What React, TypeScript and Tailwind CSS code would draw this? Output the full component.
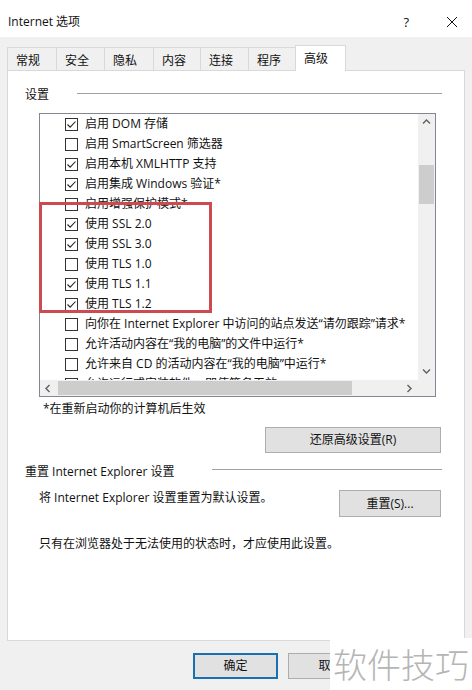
import React from 'react';

const rows: [boolean, string][] = [
  [true, '启用 DOM 存储'],
  [false, '启用 SmartScreen 筛选器'],
  [true, '启用本机 XMLHTTP 支持'],
  [true, '启用集成 Windows 验证*'],
  [false, '启用增强保护模式*'],
  [true, '使用 SSL 2.0'],
  [true, '使用 SSL 3.0'],
  [false, '使用 TLS 1.0'],
  [true, '使用 TLS 1.1'],
  [true, '使用 TLS 1.2'],
  [false, '向你在 Internet Explorer 中访问的站点发送“请勿跟踪”请求*'],
  [false, '允许活动内容在“我的电脑”的文件中运行*'],
  [false, '允许来自 CD 的活动内容在“我的电脑”中运行*'],
  [false, '允许运行或安装软件，即使签名无效'],
];

const tabs = [
  { label: '常规', w: 'w-[49px]' },
  { label: '安全', w: 'w-[48px]' },
  { label: '隐私', w: 'w-[49px]' },
  { label: '内容', w: 'w-[47px]' },
  { label: '连接', w: 'w-[48px]' },
  { label: '程序', w: 'w-[47px]' },
];

function Check({ on }: { on: boolean }) {
  return (
    <span className="flex h-[13px] w-[13px] shrink-0 items-center justify-center border border-[#333] bg-white">
      {on && (
        <svg width="11" height="11" viewBox="0 0 11 11">
          <path d="M1.5 5.5 4.2 8.2 9.5 2.5" fill="none" stroke="#222" strokeWidth="1.1" />
        </svg>
      )}
    </span>
  );
}

function Chevron({ dir }: { dir: 'up' | 'down' | 'left' | 'right' }) {
  const d = {
    up: 'M1 5.5 4.5 2 8 5.5',
    down: 'M1 2.5 4.5 6 8 2.5',
    left: 'M5.5 1 2 4.5 5.5 8',
    right: 'M2.5 1 6 4.5 2.5 8',
  }[dir];
  return (
    <svg width="9" height="9" viewBox="0 0 9 9">
      <path d={d} fill="none" stroke="#606060" strokeWidth="1.4" />
    </svg>
  );
}

function Button({ children, def, w }: { children: React.ReactNode; def?: boolean; w: string }) {
  return (
    <div
      className={
        def
          ? `flex h-[26px] ${w} items-center justify-center border-2 border-[#1a6fb0] bg-[#e1e1e1] leading-[16px]`
          : `flex h-[26px] ${w} items-center justify-center border border-[#adadad] bg-[#e1e1e1] leading-[16px]`
      }
    >
      {children}
    </div>
  );
}

export default function App() {
  return (
    <div className="relative h-[690px] w-[472px] overflow-hidden bg-[#f0f0f0] font-['Open_Sans','Noto_Sans_CJK_SC',sans-serif] text-[12px] leading-[16px] text-[#111]">
      {/* Title bar */}
      <div className="flex h-[37px] items-center bg-white pl-[8px] pr-[14px] pt-[6px]">
        <span>Internet 选项</span>
        <span className="ml-auto mr-[37px] text-[13px]">?</span>
        <svg width="12" height="12" viewBox="0 0 12 12">
          <path d="M1 1 11 11M11 1 1 11" stroke="#111" strokeWidth="1" />
        </svg>
      </div>

      <div className="px-[7px] pt-[7px]">
        {/* Tabs */}
        <div className="flex h-[26px] items-end">
          {tabs.map((t) => (
            <div
              key={t.label}
              className={`h-[23px] ${t.w} border-l border-t border-[#d9d9d9] bg-[#f0f0f0] pl-[8px] pt-[5px]`}
            >
              {t.label}
            </div>
          ))}
          <div className="relative top-px z-10 h-[26px] w-[51px] border-x border-t border-[#d9d9d9] bg-white pl-[8px] pt-[5px]">
            高级
          </div>
        </div>

        {/* Panel */}
        <div className="flex h-[571px] flex-col border border-[#d9d9d9] bg-white">
          <div className="mt-[16px] flex items-start pl-[17px] pr-[22px]">
            <span className="w-[52px]">设置</span>
            <div className="mt-[6px] h-px flex-1 bg-[#a0a0a0]" />
          </div>

          {/* List box */}
          <div className="relative ml-[31px] mt-[10px] h-[284px] w-[397px] border border-[#828790] bg-white">
            <div className="flex h-full flex-col">
              <div className="flex min-h-0 flex-1">
                <div className="flex-1 overflow-hidden">
                  {rows.map(([on, text]) => (
                    <div key={text} className="flex h-[20px] items-center whitespace-nowrap pl-[25px]">
                      <Check on={on} />
                      <span className="ml-[7px]">{text}</span>
                    </div>
                  ))}
                </div>
                <div className="flex w-[17px] flex-col bg-[#f0f0f0]">
                  <div className="flex h-[17px] items-center justify-center">
                    <Chevron dir="up" />
                  </div>
                  <div className="flex-1">
                    <div className="mx-px mt-[34px] h-[39px] bg-[#cdcdcd]" />
                  </div>
                  <div className="flex h-[17px] items-center justify-center">
                    <Chevron dir="down" />
                  </div>
                </div>
              </div>
              <div className="flex h-[16px] bg-[#f0f0f0]">
                <div className="flex w-[17px] items-center justify-center">
                  <Chevron dir="left" />
                </div>
                <div className="flex-1 py-px">
                  <div className="ml-px h-full w-[294px] bg-[#cdcdcd]" />
                </div>
                <div className="flex w-[17px] items-center justify-center">
                  <Chevron dir="right" />
                </div>
                <div className="w-[17px]" />
              </div>
            </div>
            {/* red highlight */}
            <div className="absolute left-[-1px] top-[88px] h-[111px] w-[173px] border-[3px] border-[#cd4a50]" />
          </div>

          <div className="ml-[35px] mt-[4px]">*在重新启动你的计算机后生效</div>

          <div className="mr-[23px] mt-[10px] self-end">
            <Button w="w-[176px]">还原高级设置(R)</Button>
          </div>

          <div className="mt-[11px] flex items-start pl-[17px] pr-[22px]">
            <span className="w-[187px]">重置 Internet Explorer 设置</span>
            <div className="mt-[5px] h-px flex-1 bg-[#a0a0a0]" />
          </div>

          <div className="mt-[10px] flex items-start pl-[31px] pr-[23px]">
            <span>将 Internet Explorer 设置重置为默认设置。</span>
            <div className="ml-auto">
              <div className="flex h-[27px] w-[102px] items-center justify-center border border-[#adadad] bg-[#e1e1e1]">
                重置(S)...
              </div>
            </div>
          </div>

          <div className="ml-[31px] mt-[19px]">只有在浏览器处于无法使用的状态时，才应使用此设置。</div>
        </div>

        {/* Dialog buttons */}
        <div className="mt-[12px] flex gap-[10px] pl-[186px]">
          <Button def w="w-[85px]">确定</Button>
          <Button w="w-[85px]">取消</Button>
        </div>
      </div>

      {/* watermark */}
      <div className="absolute bottom-0 right-0 flex h-[52px] w-[142px] items-center bg-white pl-[3px] font-['Noto_Sans_CJK_SC',sans-serif] text-[34px] font-light leading-[40px] text-[#b5b5b5]">
        软件技巧
      </div>
    </div>
  );
}
